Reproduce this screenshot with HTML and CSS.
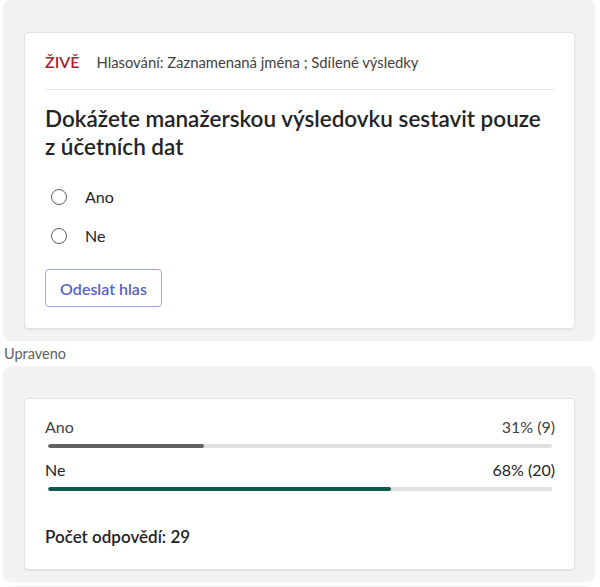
FILE: index.html
```html
<!DOCTYPE html>
<html lang="cs">
<head>
<meta charset="utf-8">
<title>Hlasování</title>
<link rel="stylesheet" href="styles.css">
</head>
<body>
<div class="page">
  <section class="panel">
    <div class="card poll">
      <div class="meta">
        <span class="live">ŽIVĚ</span>
        <span class="info">Hlasování: Zaznamenaná jména ; Sdílené výsledky</span>
      </div>
      <h1 class="question">Dokážete manažerskou výsledovku sestavit pouze z účetních dat</h1>
      <div class="options">
        <label class="option"><span class="radio"></span><span>Ano</span></label>
        <label class="option"><span class="radio"></span><span>Ne</span></label>
      </div>
      <button class="submit">Odeslat hlas</button>
    </div>
  </section>
  <div class="edited">Upraveno</div>
  <section class="panel">
    <div class="card results">
      <div class="result">
        <div class="result-row"><span>Ano</span><span>31% (9)</span></div>
        <div class="track"><div class="fill gray" style="width:31%"></div></div>
      </div>
      <div class="result">
        <div class="result-row strong"><span>Ne</span><span>68% (20)</span></div>
        <div class="track"><div class="fill green" style="width:68%"></div></div>
      </div>
      <div class="count">Počet odpovědí: 29</div>
    </div>
  </section>
  <div class="next-panel"></div>
</div>
</body>
</html>
```
FILE: styles.css
```css
* { box-sizing: border-box; }
html, body { margin: 0; padding: 0; background: #ffffff; }
body {
  font-family: "Lato", "Noto Sans", sans-serif;
  color: #242424;
}
.page {
  width: 600px;
  padding: 0 5px 0 3px;
}
.panel {
  background: #f2f2f2;
  border-radius: 8px;
  padding: 32px 20px 12px 21px;
}
.card {
  background: #ffffff;
  border: 1px solid #e2e2e2;
  border-radius: 4px;
  box-shadow: 0 1px 2px rgba(0,0,0,0.07);
}
.poll {
  padding: 19px 19px 0 20px;
  height: 297px;
}
.meta {
  display: flex;
  align-items: center;
  gap: 17px;
  height: 20px;
  line-height: 20px;
}
.live {
  color: #a4262c;
  font-size: 16px;
  font-weight: 600;
}
.info {
  font-size: 14.8px;
  color: #424242;
}
.question {
  margin: 17px 0 0;
  padding-top: 15px;
  border-top: 1px solid #e6e6e6;
  font-size: 22.5px;
  line-height: 28px;
  font-weight: 600;
  padding-right: 8px;
}
.options {
  display: flex;
  flex-direction: column;
  gap: 19px;
  margin-top: 26px;
}
.option {
  display: flex;
  align-items: center;
  gap: 18px;
  font-size: 16px;
  line-height: 20px;
  height: 20px;
  padding-left: 6px;
}
.radio {
  width: 16px;
  height: 16px;
  border: 1.3px solid #616161;
  border-radius: 50%;
  flex: none;
}
.submit {
  display: block;
  margin-top: 23px;
  height: 38px;
  width: 117px;
  padding: 0;
  background: #ffffff;
  border: 1px solid #9fa3ee;
  border-radius: 4px;
  color: #5b5fc7;
  font-family: inherit;
  font-size: 16px;
  font-weight: 600;
}
.edited {
  font-size: 14.5px;
  color: #616161;
  height: 25px;
  line-height: 26px;
  padding-left: 1px;
}
.results {
  padding: 18px 19px 0 20px;
  height: 172px;
}
.result-row {
  display: flex;
  justify-content: space-between;
  font-size: 16px;
  line-height: 20px;
  color: #424242;
}
.result-row.strong { color: #242424; }
.track {
  margin: 7px 3px 0 3px;
  height: 4px;
  background: #e0e0e0;
  border-radius: 2px;
  overflow: hidden;
}
.fill { height: 100%; border-radius: 2px; }
.fill.gray { background: #616161; }
.fill.green { background: #0e5a4c; }
.result + .result { margin-top: 12px; }
.count {
  margin-top: 36px;
  font-size: 17px;
  font-weight: 600;
  line-height: 20px;
}
.next-panel {
  margin-top: 4px;
  height: 10px;
  background: #f2f2f2;
  border-radius: 8px 8px 0 0;
}
```
